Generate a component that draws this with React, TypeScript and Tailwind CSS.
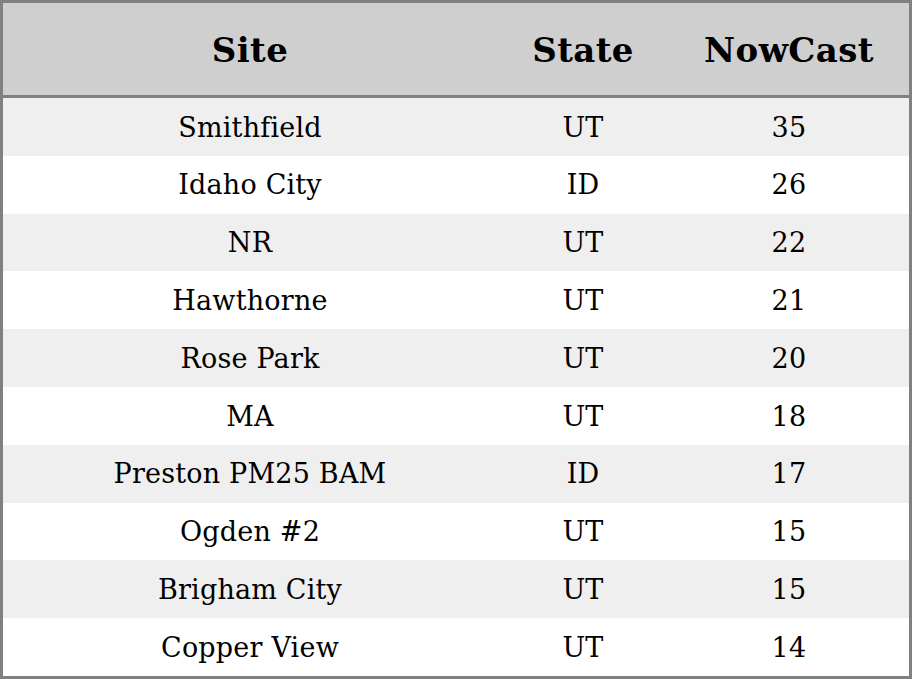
const rows: [string, string, number][] = [
  ["Smithfield", "UT", 35],
  ["Idaho City", "ID", 26],
  ["NR", "UT", 22],
  ["Hawthorne", "UT", 21],
  ["Rose Park", "UT", 20],
  ["MA", "UT", 18],
  ["Preston PM25 BAM", "ID", 17],
  ["Ogden #2", "UT", 15],
  ["Brigham City", "UT", 15],
  ["Copper View", "UT", 14],
]

export default function App() {
  return (
    <div
      className="w-[912px] h-[679px] border-[3px] border-[#808080] bg-white flex flex-col text-black [font-variant-ligatures:none]"
      style={{ fontFamily: '"DejaVu Serif", serif' }}
    >
      <div className="h-[95px] shrink-0 bg-[#cfcfcf] border-b-[3px] border-[#808080] grid grid-cols-[494px_172px_1fr] items-center pt-[2px] text-[34px] font-bold tracking-[0.4px]">
        <div className="text-center">Site</div>
        <div className="text-center">State</div>
        <div className="text-center">NowCast</div>
      </div>
      <div className="flex-1 flex flex-col">
        {rows.map(([site, state, val], i) => (
          <div
            key={site}
            className={`flex-1 grid grid-cols-[494px_172px_1fr] items-center pt-[2px] text-[27px] tracking-[0.2px] ${i % 2 === 0 ? "bg-[#efefef]" : "bg-white"}`}
          >
            <div className="text-center">{site}</div>
            <div className="text-center">{state}</div>
            <div className="text-center">{val}</div>
          </div>
        ))}
      </div>
    </div>
  )
}
